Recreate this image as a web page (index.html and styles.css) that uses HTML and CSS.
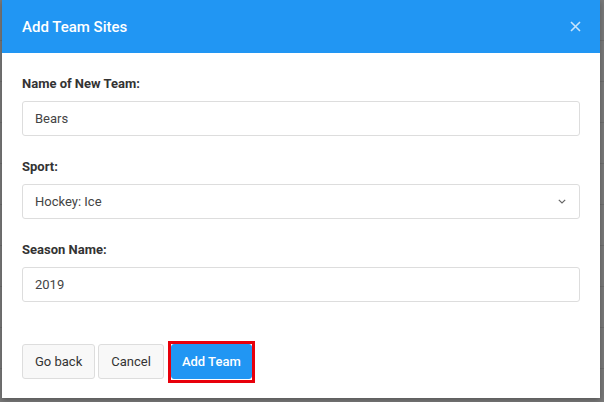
FILE: index.html
```html
<!DOCTYPE html>
<html lang="en">
<head>
    <meta charset="UTF-8">
    <title>Add Team Sites</title>
    <link rel="stylesheet" href="styles.css">
</head>
<body>
    <div class="backdrop"></div>

    <div class="modal">
        <div class="modal-header">
            <h2>Add Team Sites</h2>
            <button class="close" aria-label="Close">
                <svg width="11" height="11" viewBox="0 0 11 11">
                    <path d="M1 1 L10 10 M10 1 L1 10" stroke="rgba(255,255,255,0.75)" stroke-width="1.6" fill="none"/>
                </svg>
            </button>
        </div>

        <div class="modal-body">
            <div class="field">
                <label for="teamName">Name of New Team:</label>
                <input type="text" id="teamName" value="Bears">
            </div>

            <div class="field">
                <label for="sport">Sport:</label>
                <div class="select">
                    <span>Hockey: Ice</span>
                    <svg width="8" height="5" viewBox="0 0 8 5">
                        <path d="M0.8 0.8 L4 4 L7.2 0.8" stroke="#666" stroke-width="1.2" fill="none"/>
                    </svg>
                </div>
            </div>

            <div class="field">
                <label for="season">Season Name:</label>
                <input type="text" id="season" value="2019">
            </div>

            <div class="actions">
                <button class="btn">Go back</button>
                <button class="btn">Cancel</button>
                <span class="highlight">
                    <button class="btn btn-primary">Add Team</button>
                </span>
            </div>
        </div>
    </div>
</body>
</html>
```

FILE: styles.css
```css
body {
    margin: 0;
    width: 604px;
    height: 402px;
    overflow: hidden;
    position: relative;
    background-color: #7a7a7a;
    font-family: Roboto, "Liberation Sans", Arial, sans-serif;
}
.backdrop {
    position: absolute;
    left: 0;
    top: 0;
    right: 0;
    bottom: 0;
    background: repeating-linear-gradient(to bottom, #7a7a7a 0, #7a7a7a 40px, #6e6e6e 40px, #6e6e6e 41px);
}
.modal {
    position: relative;
    margin-left: 2px;
    width: 598px;
    height: 398px;
    background-color: #fff;
    box-shadow: 0 2px 6px rgba(0,0,0,0.3);
}
.modal-header {
    height: 53px;
    background-color: #2196f3;
    display: flex;
    align-items: center;
    justify-content: space-between;
    padding: 0 19px 0 20px;
}
.modal-header h2 {
    margin: 0;
    color: #fff;
    font-size: 15px;
    font-weight: 500;
}
.close {
    background: none;
    border: none;
    padding: 0;
    display: flex;
    cursor: pointer;
}
.modal-body {
    padding: 22px 20px 0 20px;
}
.field {
    display: flex;
    flex-direction: column;
    margin-bottom: 22px;
}
.field label {
    font-size: 13px;
    font-weight: bold;
    color: #333;
    line-height: 18px;
    margin-bottom: 8px;
}
.field input,
.select {
    box-sizing: border-box;
    height: 35px;
    width: 558px;
    border: 1px solid #ddd;
    border-radius: 3px;
    padding: 0 12px;
    font-family: inherit;
    font-size: 13px;
    color: #444;
    background: #fff;
}
.select {
    display: flex;
    align-items: center;
    justify-content: space-between;
    padding-right: 13px;
}
.actions {
    display: flex;
    align-items: flex-start;
    gap: 3px;
    padding-top: 20px;
}
.btn {
    height: 35px;
    padding: 0 12px;
    border: 1px solid #ddd;
    border-radius: 3px;
    background-color: #f8f8f8;
    color: #333;
    font-family: inherit;
    font-size: 13px;
    cursor: pointer;
}
.highlight {
    display: flex;
    margin-top: -3px;
    margin-left: 1px;
    border: 3px solid #e8000b;
    padding-bottom: 1px;
}
.btn-primary {
    width: 81px;
    padding: 0;
    background-color: #2196f3;
    border-color: #2196f3;
    color: #fff;
    font-weight: 500;
}
```
